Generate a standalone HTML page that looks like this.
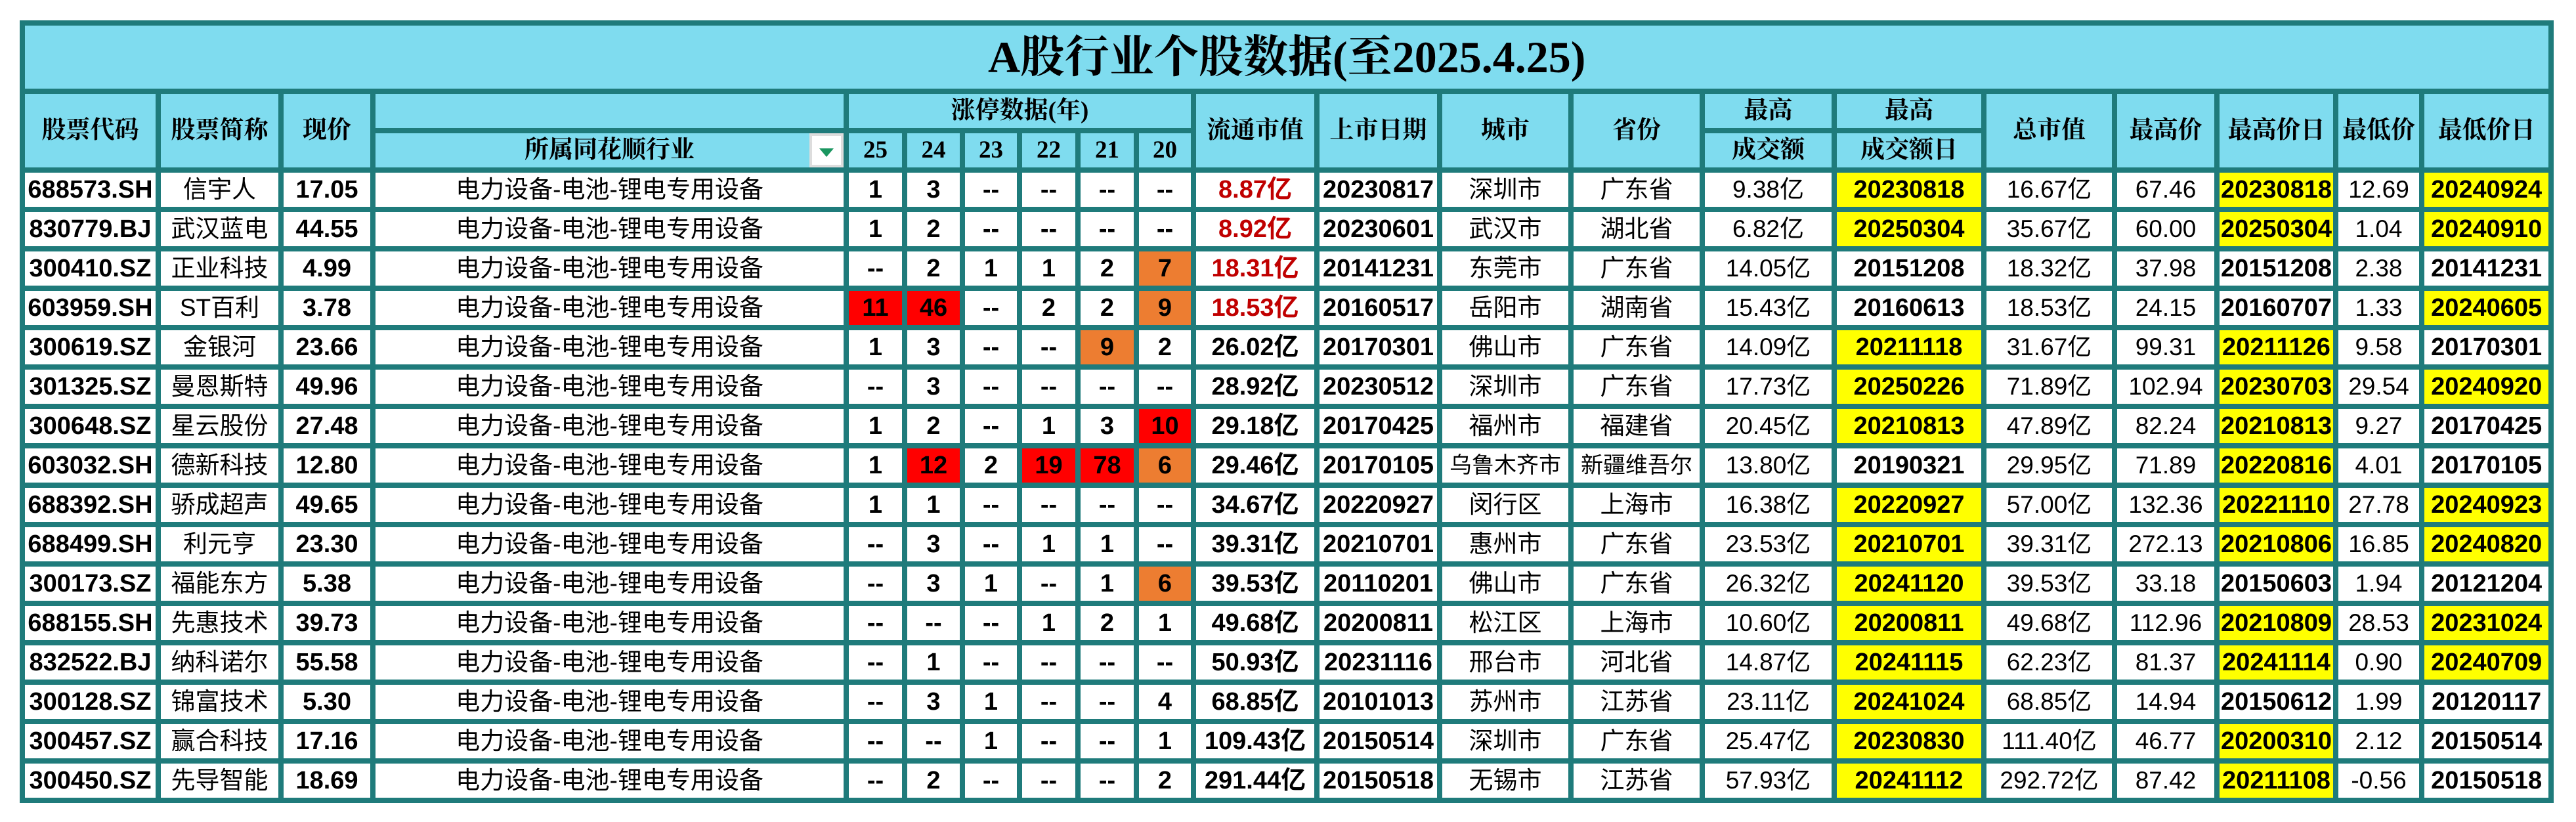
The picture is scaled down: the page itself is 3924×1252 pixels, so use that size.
<!DOCTYPE html>
<html><head><meta charset="utf-8"><style>
html,body{margin:0;padding:0;background:#fff;width:3924px;height:1252px;overflow:hidden}
table{position:absolute;left:30px;top:31px;width:3860px;table-layout:fixed;border-collapse:separate;border-spacing:8px;background:#1f7b7b}
td{padding:0;text-align:center;vertical-align:middle;white-space:nowrap;overflow:hidden;background:#fff;font-family:"Liberation Sans","Noto Sans CJK SC",sans-serif;font-weight:bold;font-size:38px;color:#000;height:52px;line-height:52px}
td.c{font-weight:normal;font-size:37px}
.h td{background:#7fdcef;font-family:"Liberation Serif","Noto Serif CJK SC",serif;font-weight:bold;font-size:37px}
td.t{background:#7fdcef;height:96px;font-family:"Liberation Serif","Noto Serif CJK SC",serif;font-size:68px;font-weight:bold}
.r{background:#ff0000!important}.o{background:#ed7d31!important}.y{background:#ffff00!important}
.rt{color:#c00000}
.dd{position:absolute;right:0;top:0;width:52px;height:52px;background:#fff;border:4px solid #ddd;box-sizing:border-box}
.dd:after{content:"";position:absolute;left:11px;top:19px;border-left:11px solid transparent;border-right:11px solid transparent;border-top:13px solid #1a9660}
</style></head><body>
<table>
<colgroup><col style="width:199px"><col style="width:179px"><col style="width:132px"><col style="width:713px"><col style="width:81px"><col style="width:80px"><col style="width:79px"><col style="width:81px"><col style="width:81px"><col style="width:79px"><col style="width:180px"><col style="width:179px"><col style="width:192px"><col style="width:192px"><col style="width:193px"><col style="width:220px"><col style="width:191px"><col style="width:148px"><col style="width:173px"><col style="width:123px"><col style="width:189px"></colgroup>
<tr><td class="t" colspan="21">A股行业个股数据(至2025.4.25)</td></tr>
<tr class="h"><td rowspan="2">股票代码</td><td rowspan="2">股票简称</td><td rowspan="2">现价</td><td></td><td colspan="6">涨停数据(年)</td><td rowspan="2">流通市值</td><td rowspan="2">上市日期</td><td rowspan="2">城市</td><td rowspan="2">省份</td><td>最高</td><td>最高</td><td rowspan="2">总市值</td><td rowspan="2">最高价</td><td rowspan="2">最高价日</td><td rowspan="2">最低价</td><td rowspan="2">最低价日</td></tr>
<tr class="h"><td style="position:relative">所属同花顺行业<div class="dd"></div></td><td>25</td><td>24</td><td>23</td><td>22</td><td>21</td><td>20</td><td>成交额</td><td>成交额日</td></tr>
<tr><td>688573.SH</td><td class="c">信宇人</td><td>17.05</td><td class="c">电力设备-电池-锂电专用设备</td><td>1</td><td>3</td><td>--</td><td>--</td><td>--</td><td>--</td><td class="rt">8.87亿</td><td>20230817</td><td class="c">深圳市</td><td class="c">广东省</td><td class="c">9.38亿</td><td class="y">20230818</td><td class="c">16.67亿</td><td class="c">67.46</td><td class="y">20230818</td><td class="c">12.69</td><td class="y">20240924</td></tr>
<tr><td>830779.BJ</td><td class="c">武汉蓝电</td><td>44.55</td><td class="c">电力设备-电池-锂电专用设备</td><td>1</td><td>2</td><td>--</td><td>--</td><td>--</td><td>--</td><td class="rt">8.92亿</td><td>20230601</td><td class="c">武汉市</td><td class="c">湖北省</td><td class="c">6.82亿</td><td class="y">20250304</td><td class="c">35.67亿</td><td class="c">60.00</td><td class="y">20250304</td><td class="c">1.04</td><td class="y">20240910</td></tr>
<tr><td>300410.SZ</td><td class="c">正业科技</td><td>4.99</td><td class="c">电力设备-电池-锂电专用设备</td><td>--</td><td>2</td><td>1</td><td>1</td><td>2</td><td class="o">7</td><td class="rt">18.31亿</td><td>20141231</td><td class="c">东莞市</td><td class="c">广东省</td><td class="c">14.05亿</td><td>20151208</td><td class="c">18.32亿</td><td class="c">37.98</td><td>20151208</td><td class="c">2.38</td><td>20141231</td></tr>
<tr><td>603959.SH</td><td class="c">ST百利</td><td>3.78</td><td class="c">电力设备-电池-锂电专用设备</td><td class="r">11</td><td class="r">46</td><td>--</td><td>2</td><td>2</td><td class="o">9</td><td class="rt">18.53亿</td><td>20160517</td><td class="c">岳阳市</td><td class="c">湖南省</td><td class="c">15.43亿</td><td>20160613</td><td class="c">18.53亿</td><td class="c">24.15</td><td>20160707</td><td class="c">1.33</td><td class="y">20240605</td></tr>
<tr><td>300619.SZ</td><td class="c">金银河</td><td>23.66</td><td class="c">电力设备-电池-锂电专用设备</td><td>1</td><td>3</td><td>--</td><td>--</td><td class="o">9</td><td>2</td><td>26.02亿</td><td>20170301</td><td class="c">佛山市</td><td class="c">广东省</td><td class="c">14.09亿</td><td class="y">20211118</td><td class="c">31.67亿</td><td class="c">99.31</td><td class="y">20211126</td><td class="c">9.58</td><td>20170301</td></tr>
<tr><td>301325.SZ</td><td class="c">曼恩斯特</td><td>49.96</td><td class="c">电力设备-电池-锂电专用设备</td><td>--</td><td>3</td><td>--</td><td>--</td><td>--</td><td>--</td><td>28.92亿</td><td>20230512</td><td class="c">深圳市</td><td class="c">广东省</td><td class="c">17.73亿</td><td class="y">20250226</td><td class="c">71.89亿</td><td class="c">102.94</td><td class="y">20230703</td><td class="c">29.54</td><td class="y">20240920</td></tr>
<tr><td>300648.SZ</td><td class="c">星云股份</td><td>27.48</td><td class="c">电力设备-电池-锂电专用设备</td><td>1</td><td>2</td><td>--</td><td>1</td><td>3</td><td class="r">10</td><td>29.18亿</td><td>20170425</td><td class="c">福州市</td><td class="c">福建省</td><td class="c">20.45亿</td><td class="y">20210813</td><td class="c">47.89亿</td><td class="c">82.24</td><td class="y">20210813</td><td class="c">9.27</td><td>20170425</td></tr>
<tr><td>603032.SH</td><td class="c">德新科技</td><td>12.80</td><td class="c">电力设备-电池-锂电专用设备</td><td>1</td><td class="r">12</td><td>2</td><td class="r">19</td><td class="r">78</td><td class="o">6</td><td>29.46亿</td><td>20170105</td><td class="c" style="font-size:34px">乌鲁木齐市</td><td class="c" style="font-size:34px">新疆维吾尔</td><td class="c">13.80亿</td><td>20190321</td><td class="c">29.95亿</td><td class="c">71.89</td><td class="y">20220816</td><td class="c">4.01</td><td>20170105</td></tr>
<tr><td>688392.SH</td><td class="c">骄成超声</td><td>49.65</td><td class="c">电力设备-电池-锂电专用设备</td><td>1</td><td>1</td><td>--</td><td>--</td><td>--</td><td>--</td><td>34.67亿</td><td>20220927</td><td class="c">闵行区</td><td class="c">上海市</td><td class="c">16.38亿</td><td class="y">20220927</td><td class="c">57.00亿</td><td class="c">132.36</td><td class="y">20221110</td><td class="c">27.78</td><td class="y">20240923</td></tr>
<tr><td>688499.SH</td><td class="c">利元亨</td><td>23.30</td><td class="c">电力设备-电池-锂电专用设备</td><td>--</td><td>3</td><td>--</td><td>1</td><td>1</td><td>--</td><td>39.31亿</td><td>20210701</td><td class="c">惠州市</td><td class="c">广东省</td><td class="c">23.53亿</td><td class="y">20210701</td><td class="c">39.31亿</td><td class="c">272.13</td><td class="y">20210806</td><td class="c">16.85</td><td class="y">20240820</td></tr>
<tr><td>300173.SZ</td><td class="c">福能东方</td><td>5.38</td><td class="c">电力设备-电池-锂电专用设备</td><td>--</td><td>3</td><td>1</td><td>--</td><td>1</td><td class="o">6</td><td>39.53亿</td><td>20110201</td><td class="c">佛山市</td><td class="c">广东省</td><td class="c">26.32亿</td><td class="y">20241120</td><td class="c">39.53亿</td><td class="c">33.18</td><td>20150603</td><td class="c">1.94</td><td>20121204</td></tr>
<tr><td>688155.SH</td><td class="c">先惠技术</td><td>39.73</td><td class="c">电力设备-电池-锂电专用设备</td><td>--</td><td>--</td><td>--</td><td>1</td><td>2</td><td>1</td><td>49.68亿</td><td>20200811</td><td class="c">松江区</td><td class="c">上海市</td><td class="c">10.60亿</td><td class="y">20200811</td><td class="c">49.68亿</td><td class="c">112.96</td><td class="y">20210809</td><td class="c">28.53</td><td class="y">20231024</td></tr>
<tr><td>832522.BJ</td><td class="c">纳科诺尔</td><td>55.58</td><td class="c">电力设备-电池-锂电专用设备</td><td>--</td><td>1</td><td>--</td><td>--</td><td>--</td><td>--</td><td>50.93亿</td><td>20231116</td><td class="c">邢台市</td><td class="c">河北省</td><td class="c">14.87亿</td><td class="y">20241115</td><td class="c">62.23亿</td><td class="c">81.37</td><td class="y">20241114</td><td class="c">0.90</td><td class="y">20240709</td></tr>
<tr><td>300128.SZ</td><td class="c">锦富技术</td><td>5.30</td><td class="c">电力设备-电池-锂电专用设备</td><td>--</td><td>3</td><td>1</td><td>--</td><td>--</td><td>4</td><td>68.85亿</td><td>20101013</td><td class="c">苏州市</td><td class="c">江苏省</td><td class="c">23.11亿</td><td class="y">20241024</td><td class="c">68.85亿</td><td class="c">14.94</td><td>20150612</td><td class="c">1.99</td><td>20120117</td></tr>
<tr><td>300457.SZ</td><td class="c">赢合科技</td><td>17.16</td><td class="c">电力设备-电池-锂电专用设备</td><td>--</td><td>--</td><td>1</td><td>--</td><td>--</td><td>1</td><td>109.43亿</td><td>20150514</td><td class="c">深圳市</td><td class="c">广东省</td><td class="c">25.47亿</td><td class="y">20230830</td><td class="c">111.40亿</td><td class="c">46.77</td><td class="y">20200310</td><td class="c">2.12</td><td>20150514</td></tr>
<tr><td>300450.SZ</td><td class="c">先导智能</td><td>18.69</td><td class="c">电力设备-电池-锂电专用设备</td><td>--</td><td>2</td><td>--</td><td>--</td><td>--</td><td>2</td><td>291.44亿</td><td>20150518</td><td class="c">无锡市</td><td class="c">江苏省</td><td class="c">57.93亿</td><td class="y">20241112</td><td class="c">292.72亿</td><td class="c">87.42</td><td class="y">20211108</td><td class="c">-0.56</td><td>20150518</td></tr>
</table>
</body></html>
